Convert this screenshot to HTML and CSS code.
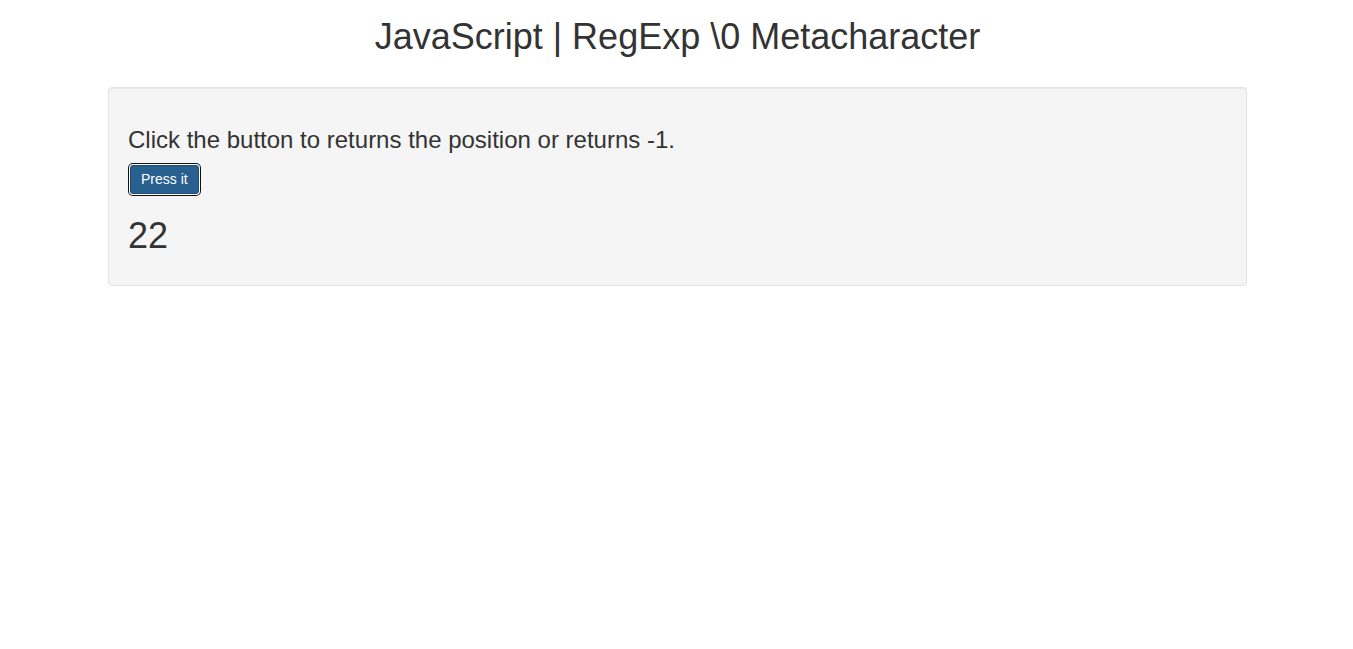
FILE: index.html
```html
<!DOCTYPE html>
<html lang="en">
<head>
<meta charset="utf-8">
<title>JavaScript | RegExp \0 Metacharacter</title>
<link rel="stylesheet" href="styles.css">
</head>
<body>
<h1 class="title">JavaScript | RegExp \0 Metacharacter</h1>
<div class="container">
  <div class="well">
    <p class="lead">Click the button to returns the position or returns -1.</p>
    <button class="btn">Press it</button>
    <p class="result">22</p>
  </div>
</div>
</body>
</html>
```
FILE: styles.css
```css
html, body {
  margin: 0;
  padding: 0;
  background: #fff;
}
body {
  font-family: "Liberation Sans", Arial, Helvetica, sans-serif;
  color: #333;
  padding-left: 2px;
}
.title {
  font-size: 36px;
  font-weight: 400;
  line-height: 1.1;
  text-align: center;
  margin: 17px 0 0;
}
.container {
  width: 1139px;
  margin: 30px auto 0;
}
.well {
  background: #f5f5f5;
  border: 1px solid #e3e3e3;
  border-radius: 4px;
  box-shadow: inset 0 1px 1px rgba(0,0,0,.05);
  padding: 19px;
  box-sizing: border-box;
  height: 199px;
}
.lead {
  font-size: 24px;
  line-height: 34px;
  margin: 16px 0 8px;
}
.btn {
  display: block;
  margin-left: 2px;
  font-family: "Liberation Sans", Arial, sans-serif;
  font-size: 14px;
  line-height: 17px;
  color: #fff;
  background: #286090;
  border: 1px solid #204d74;
  border-radius: 3px;
  padding: 5px 10px 5px 10px;
  box-shadow: 0 0 0 1px #fff, 0 0 0 2px #111;
}
.result {
  font-size: 36px;
  line-height: 1.1;
  margin: 22px 0 0;
}
```
